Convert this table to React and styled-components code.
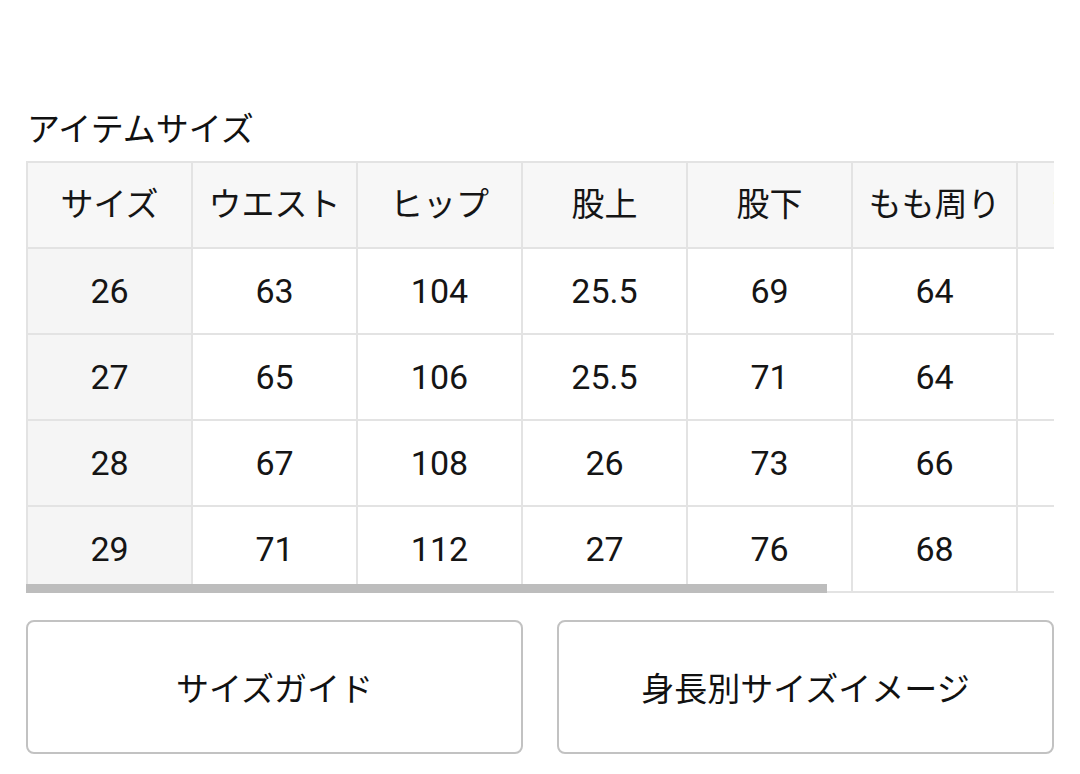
import React from 'react';
import styled, { createGlobalStyle } from 'styled-components';

const GlobalStyle = createGlobalStyle`
  html, body {
    margin: 0;
    padding: 0;
    background: #fff;
  }
  body {
    font-family: Roboto, "Noto Sans CJK JP", sans-serif;
    color: #111;
  }
`;

const Page = styled.div`
  padding: 106px 26px 0 26px;
`;

const Title = styled.h2`
  margin: 0 0 8px 1px;
  font-size: 33px;
  font-weight: 400;
  line-height: 47px;
`;

const TableWrap = styled.div`
  position: relative;
`;

const Scroller = styled.div`
  overflow-x: auto;
  scrollbar-width: none;
  &::-webkit-scrollbar {
    display: none;
  }
`;

const Table = styled.table`
  border-collapse: collapse;
  table-layout: fixed;
  width: 1320px;
`;

const Cell = styled.td`
  width: 163px;
  height: 84px;
  padding: 0;
  border: 2px solid #e3e3e3;
  text-align: center;
  vertical-align: middle;
  font-size: ${({ $head }) => ($head ? '33px' : '34px')};
  font-weight: 400;
  line-height: 1.2;
  color: #151515;
  background: ${({ $head, $first }) => ($head ? '#f7f7f7' : $first ? '#f5f5f5' : '#fff')};
  ${({ $first }) => $first && 'position: sticky; left: 0;'}
`;

const ScrollThumb = styled.div`
  position: absolute;
  left: 0;
  bottom: 0;
  height: 9px;
  background: #bdbdbd;
`;

const Buttons = styled.div`
  display: grid;
  grid-template-columns: 1fr 1fr;
  gap: 34px;
  margin-top: 27px;
`;

const Button = styled.button`
  height: 134px;
  border: 2px solid #c2c2c2;
  border-radius: 8px;
  background: #fff;
  font-family: Roboto, "Noto Sans CJK JP", sans-serif;
  font-size: 33px;
  color: #111;
  padding: 0;
`;

const headers = ['サイズ', 'ウエスト', 'ヒップ', '股上', '股下', 'もも周り', 'ワタリ', '裾幅'];
const rows = [
  ['26', '63', '104', '25.5', '69', '64', '32', '20'],
  ['27', '65', '106', '25.5', '71', '64', '32', '20.5'],
  ['28', '67', '108', '26', '73', '66', '33', '21'],
  ['29', '71', '112', '27', '76', '68', '34', '21.5'],
];

const VIEW = 1028;
const CONTENT = 1320;

export default function App() {
  return (
    <Page>
      <GlobalStyle />
      <Title>アイテムサイズ</Title>
      <TableWrap>
        <Scroller>
          <Table>
            <thead>
              <tr>
                {headers.map((h, i) => (
                  <Cell as="th" key={h} $head $first={i === 0}>{h}</Cell>
                ))}
              </tr>
            </thead>
            <tbody>
              {rows.map((r) => (
                <tr key={r[0]}>
                  {r.map((v, i) => (
                    <Cell key={i} $first={i === 0}>{v}</Cell>
                  ))}
                </tr>
              ))}
            </tbody>
          </Table>
        </Scroller>
        <ScrollThumb style={{ width: Math.round((VIEW * VIEW) / CONTENT) }} />
      </TableWrap>
      <Buttons>
        <Button>サイズガイド</Button>
        <Button>身長別サイズイメージ</Button>
      </Buttons>
    </Page>
  );
}
